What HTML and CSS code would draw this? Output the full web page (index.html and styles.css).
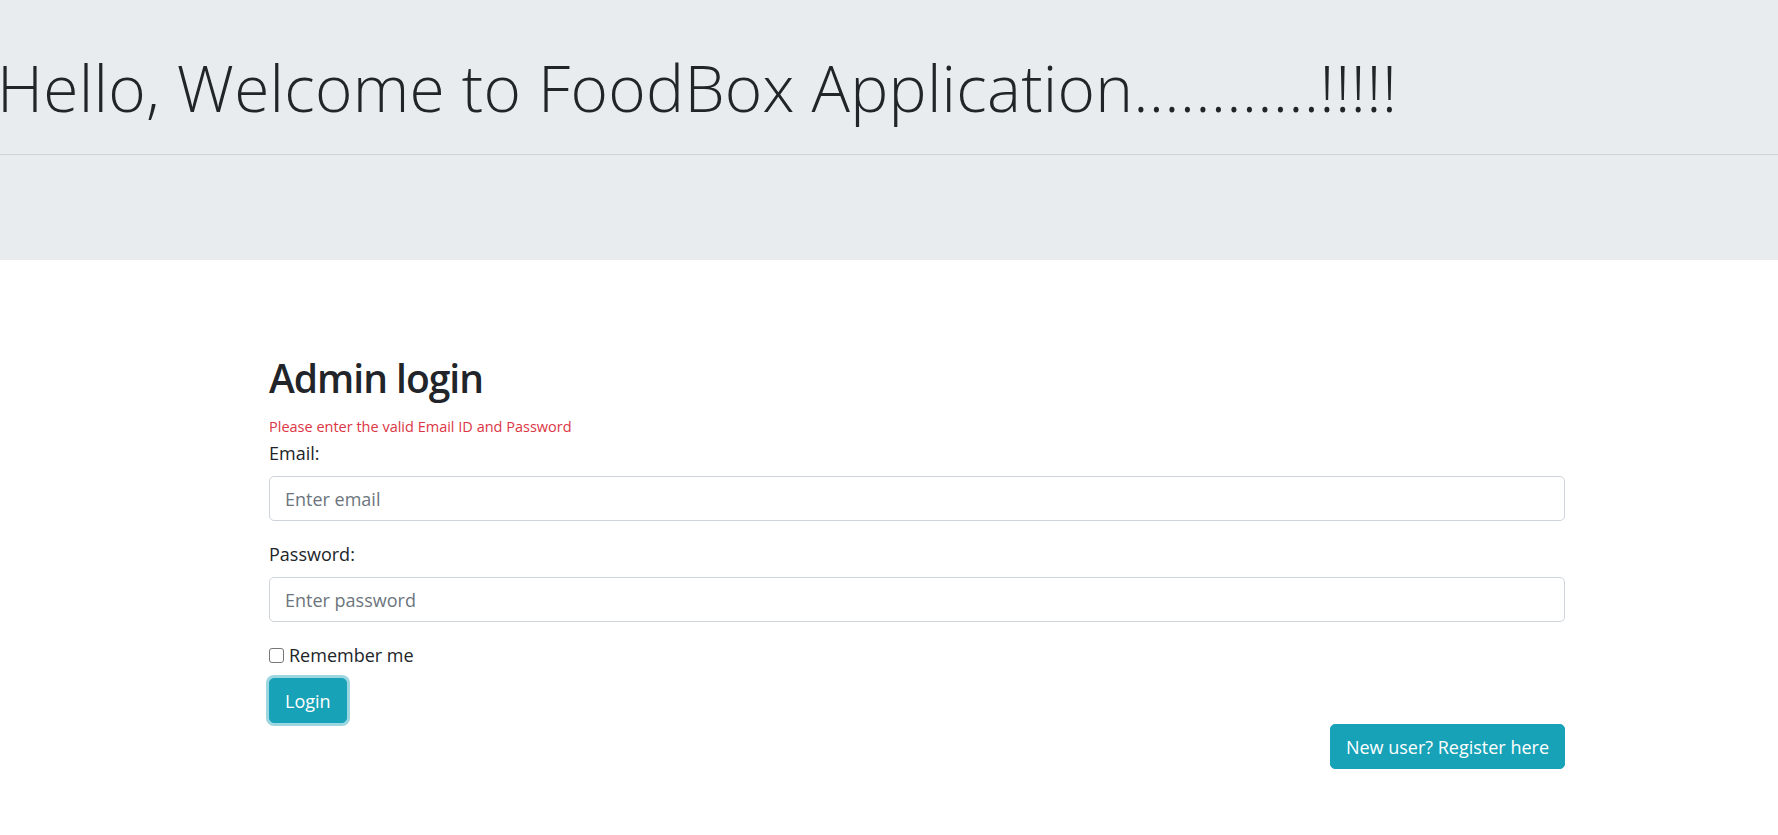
FILE: index.html
```html
<!DOCTYPE html>
<html lang="en">
<head>
<meta charset="utf-8">
<title>FoodBox Admin Login</title>
<link rel="stylesheet" href="styles.css">
</head>
<body>
<header class="jumbotron">
  <h1 class="display">Hello, Welcome to FoodBox Application............!!!!!</h1>
  <hr class="divider">
</header>
<main class="container">
  <h2 class="title">Admin login</h2>
  <p class="error">Please enter the valid Email ID and Password</p>
  <form class="login-form">
    <label class="field-label" for="email">Email:</label>
    <input class="form-control" type="email" id="email" placeholder="Enter email">
    <label class="field-label" for="pwd">Password:</label>
    <input class="form-control" type="password" id="pwd" placeholder="Enter password">
    <label class="check-row"><input class="check" type="checkbox"> Remember me</label>
    <div class="btn-row"><button class="btn btn-focus" type="button">Login</button></div>
    <div class="register-row"><a class="btn" href="#">New user? Register here</a></div>
  </form>
</main>
</body>
</html>
```
FILE: styles.css
```css
html, body {
  margin: 0;
  padding: 0;
  background: #ffffff;
}
body {
  font-family: "Open Sans", "Noto Sans", "Liberation Sans", sans-serif;
  color: #212529;
  font-size: 18px;
  line-height: 30px;
}
.jumbotron {
  background: #e9ecef;
  height: 260px;
  box-sizing: border-box;
  padding-top: 49px;
}
.display {
  margin: 0 0 0 -3px;
  font-weight: 300;
  font-size: 64px;
  line-height: 78px;
  letter-spacing: 0.25px;
  white-space: nowrap;
}
.divider {
  margin: 27px 0 0 0;
  border: 0;
  border-top: 1px solid rgba(0, 0, 0, 0.1);
  height: 0;
}
.container {
  margin-left: 269px;
  width: 1296px;
  padding-top: 94px;
}
.title {
  margin: 0;
  font-size: 39px;
  line-height: 48px;
  font-weight: 600;
  letter-spacing: -1px;
}
.error {
  margin: 15px 0 0 0;
  color: #dc3545;
  font-size: 14.5px;
  line-height: 20px;
}
.login-form {
  display: flex;
  flex-direction: column;
  margin-top: 1px;
}
.field-label {
  display: block;
  line-height: 30px;
  margin-bottom: 8px;
}
.form-control {
  box-sizing: border-box;
  width: 100%;
  height: 45px;
  margin: 0 0 18px 0;
  padding: 0 15px;
  font-family: inherit;
  font-size: 18px;
  color: #495057;
  background: #fff;
  border: 1px solid #ced4da;
  border-radius: 5px;
  outline: none;
}
.form-control::placeholder {
  color: #6c757d;
}
.check-row {
  display: flex;
  align-items: center;
  line-height: 30px;
  gap: 5px;
}
.check {
  appearance: none;
  -webkit-appearance: none;
  margin: 0;
  width: 15px;
  height: 15px;
  border: 1px solid #767676;
  border-radius: 3px;
  background: #fff;
  box-sizing: border-box;
}
.btn-row {
  display: flex;
  margin-top: 8px;
}
.register-row {
  display: flex;
  justify-content: flex-end;
  margin-top: 1px;
}
.btn {
  display: inline-flex;
  align-items: center;
  justify-content: center;
  box-sizing: border-box;
  height: 45px;
  padding: 0 15px;
  font-family: inherit;
  font-size: 18px;
  color: #fff;
  background: #17a2b8;
  border: 1px solid #17a2b8;
  border-radius: 5px;
  text-decoration: none;
}
.btn-focus {
  box-shadow: 0 0 0 3px rgba(58, 176, 195, 0.5);
}
```
